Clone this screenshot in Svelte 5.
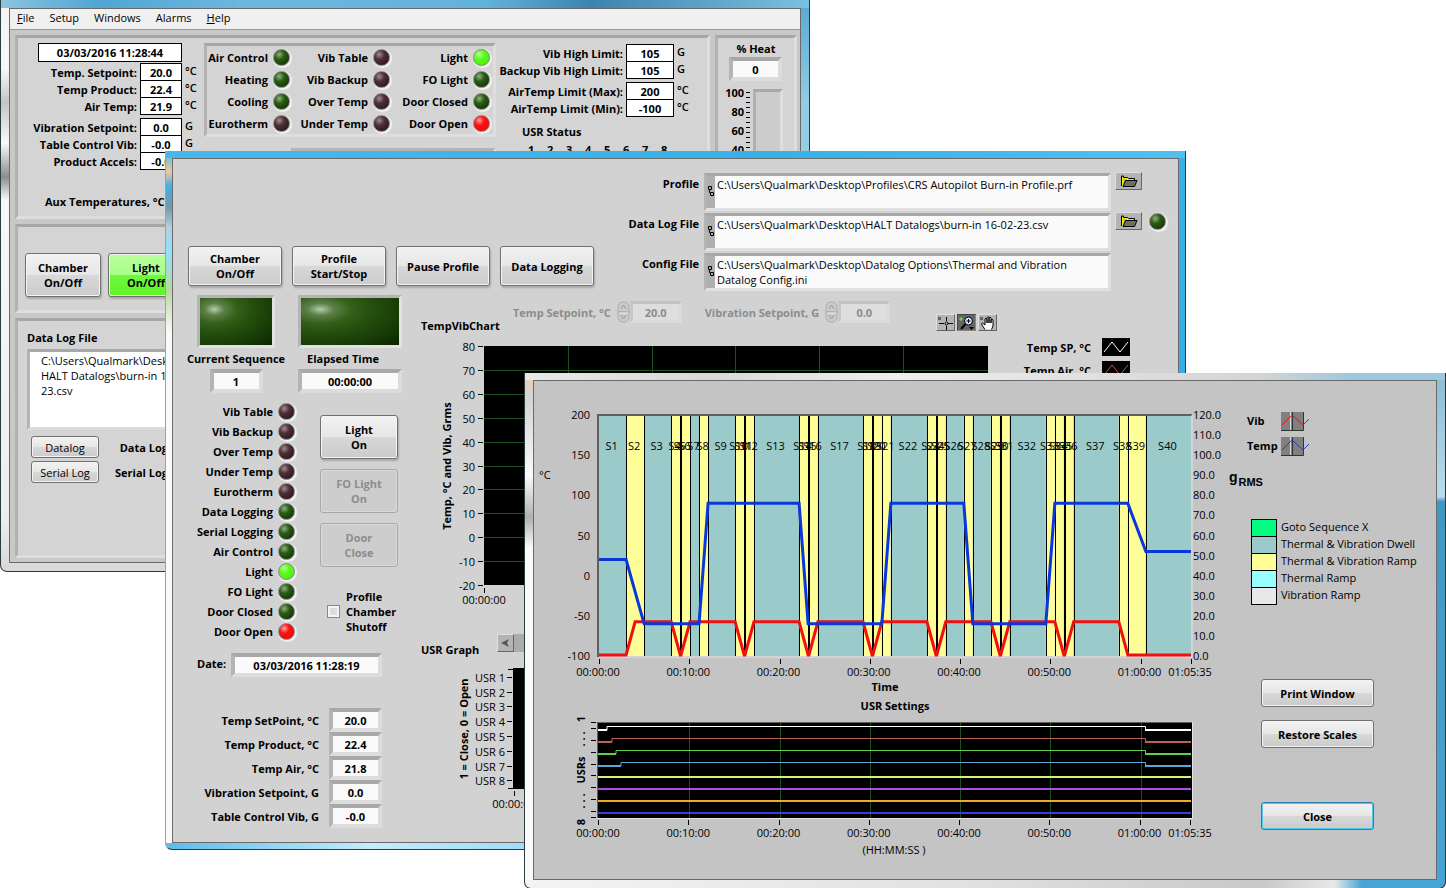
<script>
  const menus = ["File", "Setup", "Windows", "Alarms", "Help"];
  const accessKeys = ["File", "Help"];

  const readings = [
    { id: "temp-setpoint", label: "Temp. Setpoint:", value: "20.0", unit: "°C" },
    { id: "temp-product", label: "Temp Product:", value: "22.4", unit: "°C" },
    { id: "air-temp", label: "Air Temp:", value: "21.9", unit: "°C" },
    { id: "vib-setpoint", label: "Vibration Setpoint:", value: "0.0", unit: "G", gap: true },
    { id: "table-vib", label: "Table Control Vib:", value: "-0.0", unit: "G" },
    { id: "product-accels", label: "Product Accels:", value: "-0.0", unit: "G" }
  ];

  const limits = [
    { id: "vib-high", label: "Vib High Limit:", value: "105", unit: "G" },
    { id: "backup-vib-high", label: "Backup Vib High Limit:", value: "105", unit: "G" },
    { id: "air-max", label: "AirTemp Limit (Max):", value: "200", unit: "°C", gap: true },
    { id: "air-min", label: "AirTemp Limit (Min):", value: "-100", unit: "°C" }
  ];

  const overviewLeds = [
    ["Air Control", "green"], ["Vib Table", "maroon"], ["Light", "lime"],
    ["Heating", "green"], ["Vib Backup", "maroon"], ["FO Light", "green"],
    ["Cooling", "green"], ["Over Temp", "maroon"], ["Door Closed", "green"],
    ["Eurotherm", "maroon"], ["Under Temp", "maroon"], ["Door Open", "red"]
  ];

  const profileLeds = [
    ["Vib Table", "maroon"], ["Vib Backup", "maroon"], ["Over Temp", "maroon"],
    ["Under Temp", "maroon"], ["Eurotherm", "maroon"], ["Data Logging", "green"],
    ["Serial Logging", "green"], ["Air Control", "green"], ["Light", "lime"],
    ["FO Light", "green"], ["Door Closed", "green"], ["Door Open", "red"]
  ];

  const files = [
    { id: "profile", label: "Profile", path: "C:\\Users\\Qualmark\\Desktop\\Profiles\\CRS Autopilot Burn-in Profile.prf", browse: true },
    { id: "datalog", label: "Data Log File", path: "C:\\Users\\Qualmark\\Desktop\\HALT Datalogs\\burn-in 16-02-23.csv", browse: true, led: true },
    { id: "config", label: "Config File", path: "C:\\Users\\Qualmark\\Desktop\\Datalog Options\\Thermal and Vibration Datalog Config.ini" }
  ];

  const live = [
    { id: "live-sp", label: "Temp SetPoint, °C", value: "20.0" },
    { id: "live-product", label: "Temp Product, °C", value: "22.4" },
    { id: "live-air", label: "Temp Air, °C", value: "21.8" },
    { id: "live-vib", label: "Vibration Setpoint, G", value: "0.0" },
    { id: "live-table", label: "Table Control Vib, G", value: "-0.0" }
  ];

  const heatScale = [100, 80, 60, 40, 20, 0];
  const tempTicks = [80, 70, 60, 50, 40, 30, 20, 10, 0, -10, -20];

  // seconds, temperature at the end, vibration at the end, ramp
  const sequences = [
    [180, 20, 0], [120, -60, 17, 1], [180, -60, 17], [60, -60, 0, 1], [5, -60, 0],
    [60, -60, 17, 1], [60, -60, 17], [60, 90, 17, 1], [180, 90, 17], [60, 90, 0, 1],
    [5, 90, 0], [60, 90, 17, 1], [300, 90, 17], [60, -60, 0, 1], [5, -60, 0],
    [60, -60, 17, 1], [300, -60, 17], [60, -60, 0, 1], [5, -60, 0], [60, -60, 17, 1],
    [60, 90, 17, 1], [240, 90, 17], [60, 90, 0, 1], [5, 90, 0], [60, 90, 17, 1],
    [120, 90, 17], [60, -60, 17, 1], [120, -60, 17], [60, -60, 0, 1], [5, -60, 0],
    [60, -60, 17, 1], [240, -60, 17], [60, 90, 17, 1], [60, 90, 0, 1], [5, 90, 0],
    [60, 90, 17, 1], [300, 90, 17], [60, 90, 0, 1], [120, 30, 0, 1], [300, 30, 0]
  ];
  const total = 3935;
  const plot = { x: 65, y: 18, w: 592, h: 241 };

  const tx = (s) => plot.x + (s / total) * plot.w;
  const tempY = (t) => plot.y + ((200 - t) / 300) * plot.h;
  const vibY = (v) => plot.y + ((120 - v) / 120) * plot.h;

  let t = 0;
  const bands = [];
  const tempPoints = [[tx(0), tempY(20)]];
  const vibPoints = [[tx(0), vibY(0) - 1]];
  for (const [seconds, temp, vib, ramp] of sequences) {
    bands.push({ name: "S" + (bands.length + 1), x: tx(t), end: tx(t + seconds), ramp });
    tempPoints.push([tx(t + seconds), tempY(temp)]);
    let y = vibY(vib) - (vib ? 0 : 1);
    vibPoints.push([tx(t + Math.min(seconds, 60)), y], [tx(t + seconds), y]);
    t += seconds;
  }

  const times = [
    [0, "00:00:00"], [600, "00:10:00"], [1200, "00:20:00"], [1800, "00:30:00"],
    [2400, "00:40:00"], [3000, "00:50:00"], [3600, "01:00:00"], [3935, "01:05:35"]
  ];
  const vibTicks = [120, 110, 100, 90, 80, 70, 60, 50, 40, 30, 20, 10, 0];

  const usrLines = [
    { color: "#ffffff", on: 9 }, { color: "#c0605a", on: 14 },
    { color: "#5fd04c", on: 18 }, { color: "#5aa8d8", on: 23 },
    { color: "#d8f07a" }, { color: "#b050e0" }, { color: "#f0a830" }, { color: "#3c3cdc" }
  ];

  const kinds = [
    ["Goto Sequence X", "goto"],
    ["Thermal & Vibration Dwell", "dwell"],
    ["Thermal & Vibration Ramp", "both"],
    ["Thermal Ramp", "thermal"],
    ["Vibration Ramp", "vibration"]
  ];
</script>

{#snippet led(color)}
  <span class="led {color}"></span>
{/snippet}

{#snippet boxed(r)}
  <label class:gap={r.gap} for={r.id}>{r.label}</label>
  <input class="flat" class:gap={r.gap} id={r.id} value={r.value} readonly />
  <span class="unit" class:gap={r.gap}>{r.unit}</span>
{/snippet}

{#snippet setpoint(id, label, value)}
  <div class="setpoint">
    <label for={id}>{label}</label>
    <svg class="spin" width="13" height="22" viewBox="0 0 13 22">
      <rect x="1" y="1" width="11" height="20" rx="5" fill="#cacaca" stroke="#aeaeae" />
      <path d="M1 11h11M4 8l2.500-4 2.500 4M4 14l2.500 4 2.500-4" fill="none" stroke="#9a9a9a" />
      <path d="M2 12h9" stroke="#eee" />
    </svg>
    <input class="sunken" {id} {value} disabled />
  </div>
{/snippet}

<div class="desktop">
  <section class="window overview">
    <div class="client">
      <nav>
        {#each menus as m}
          <button>{#if accessKeys.includes(m)}<u>{m[0]}</u>{m.slice(1)}{:else}{m}{/if}</button>
        {/each}
      </nav>
      <div class="overview-body">
        <div class="overview-left">
          <div class="panel top-panel">
            <div class="readings">
              <input class="flat clock" aria-label="Date" value="03/03/2016 11:28:44" readonly />
              <div class="boxes">
                {#each readings as r}{@render boxed(r)}{/each}
              </div>
              <p class="aux">Aux Temperatures, °C</p>
            </div>
            <div class="status">
              <div class="panel led-grid">
                {#each overviewLeds as [name, color]}
                  <span class="name">{name}</span>{@render led(color)}
                {/each}
              </div>
              <div class="lamp strip"></div>
            </div>
            <div class="limits">
              <div class="boxes">
                {#each limits as r}{@render boxed(r)}{/each}
              </div>
              <p class="usr-status">USR Status</p>
              <div class="digits">
                {#each [1, 2, 3, 4, 5, 6, 7, 8] as n}<span>{n}</span>{/each}
              </div>
            </div>
          </div>
          <div class="panel control-panel">
            <button class="lv">Chamber<br />On/Off</button>
            <button class="lv on">Light<br />On/Off</button>
          </div>
          <div class="panel log-panel">
            <label for="log-path">Data Log File</label>
            <textarea class="sunken" id="log-path" readonly value={"C:\\Users\\Qualmark\\Desktop\\\nHALT Datalogs\\burn-in 16-02-\n23.csv"}></textarea>
            <div class="log-rows">
              <button class="lv">Datalog</button><span>Data Logging</span>
              <button class="lv">Serial Log</button><span>Serial Logging</span>
            </div>
          </div>
        </div>
        <div class="panel heat">
          <label for="heat">% Heat</label>
          <input class="sunken" id="heat" value="0" readonly />
          <div class="gauge">
            <div class="scale">
              {#each heatScale as n}<span>{n}</span>{/each}
            </div>
            <div class="ticks"></div>
            <div class="track"></div>
          </div>
        </div>
      </div>
    </div>
  </section>

  <section class="window profile">
    <div class="client">
      <header>
        <div class="commands">
          <button class="lv">Chamber<br />On/Off</button>
          <button class="lv">Profile<br />Start/Stop</button>
          <button class="lv">Pause Profile</button>
          <button class="lv">Data Logging</button>
        </div>
        <div class="files">
          {#each files as f}
            <label for={f.id}>{f.label}</label>
            <div class="path">
              <svg width="7" height="32" viewBox="0 0 7 32">
                <path d="M1.500 10.500h3v3h-3zM3.500 16.500h3v3h-3zM2.500 13.500v3h1" fill="none" stroke="#000" />
              </svg>
              <textarea id={f.id} readonly value={f.path}></textarea>
            </div>
            {#if f.browse}
              <button class="tool" aria-label="Browse {f.label}">
                <svg width="18" height="13" viewBox="0 0 18 13">
                  <path d="M2.500 10.500v-9M2.500 3h4l1 1h6.500" fill="none" stroke="#f0f000" stroke-width="2" />
                  <path d="M1.500 11V1h2v1.500h4l1 1h6v2" fill="none" stroke="#000" />
                  <path d="M3 11.500L5.500 5.500H17L14.500 11.500z" fill="#707060" stroke="#000" />
                </svg>
              </button>
            {:else}<span></span>{/if}
            {#if f.led}<span class="file-led">{@render led("green")}</span>{:else}<span></span>{/if}
          {/each}
        </div>
      </header>

      <div class="profile-body">
        <div class="profile-left">
          <div class="lamps">
            <div class="lamp small"></div>
            <div class="lamp"></div>
            <label for="seq">Current Sequence</label>
            <label class="elapsed" for="elapsed">Elapsed Time</label>
            <input class="sunken num" id="seq" value="1" readonly />
            <input class="sunken" id="elapsed" value="00:00:00" readonly />
          </div>
          <div class="middle">
            <div class="led-list">
              {#each profileLeds as [name, color]}
                <span class="name">{name}</span>{@render led(color)}
              {/each}
            </div>
            <div class="switches">
              <button class="lv">Light<br />On</button>
              <button class="lv" disabled>FO Light<br />On</button>
              <button class="lv" disabled>Door<br />Close</button>
              <label class="check"><input type="checkbox" /><span>Profile<br />Chamber<br />Shutoff</span></label>
            </div>
          </div>
          <div class="date">
            <label for="date">Date:</label>
            <input class="sunken" id="date" value="03/03/2016 11:28:19" readonly />
          </div>
          <div class="live">
            {#each live as r}
              <label for={r.id}>{r.label}</label>
              <input class="sunken num" id={r.id} value={r.value} readonly />
            {/each}
          </div>
        </div>

        <div class="profile-right">
          <div class="chart-head">
            <h2>TempVibChart</h2>
            <div class="setpoints">
              {@render setpoint("sp-temp", "Temp Setpoint, °C", "20.0")}
              {@render setpoint("sp-vib", "Vibration Setpoint, G", "0.0")}
            </div>
            <div class="tools">
              <button class="tool" aria-label="Cursor">
                <svg width="17" height="14" viewBox="0 0 17 14">
                  <path d="M1 1h3v3H1z" fill="#5a7040" />
                  <path d="M2 7.500h5M11 7.500h5M9.500 1v4M9.500 10v4" stroke="#000" />
                  <circle cx="9.500" cy="7.500" r="1.500" fill="none" stroke="#000" />
                </svg>
              </button>
              <button class="tool active" aria-label="Zoom">
                <svg width="17" height="14" viewBox="0 0 17 14">
                  <path d="M1 3h4M3 1v4" stroke="#7fe05a" />
                  <circle cx="10.500" cy="5" r="4" fill="#d8e0ff" stroke="#000" />
                  <path d="M8.500 5h4M10.500 3v4" stroke="#000" />
                  <path d="M7.500 8L3 13" stroke="#000" stroke-width="2" />
                  <path d="M11 11h5l-2.500 3z" fill="#000" />
                </svg>
              </button>
              <button class="tool" aria-label="Pan">
                <svg width="17" height="14" viewBox="0 0 17 14">
                  <path d="M1 1h3v3H1z" fill="#5a7040" />
                  <path d="M6 13.500L3 9q-1-2 .5-2L6 9V3q1-1.500 2 0v4V1.500q1-1.500 2 0V7V2q1-1.500 2 0v5V4q1-1.500 2 0v6l-1.500 3.500" fill="#fff" stroke="#000" />
                </svg>
              </button>
            </div>
          </div>
          <div class="chart-row">
            <svg class="chart" width="567" height="279" viewBox="0 0 567 279">
              <rect x="63" y="13" width="504" height="239" />
              {#each tempTicks as v, i}
                {@const y = Math.round(13 + i * 23.9) + 0.5}
                {#if i > 0 && i < 10}<path class="grid" d="M63 {y}h504" />{/if}
                <path class="tick" d="M57 {y}h5" />
                <text class="end" x="54" y={y + 4}>{v}</text>
              {/each}
              {#each [1, 2, 3, 4, 5] as i}
                <path class="grid" d="M{Math.round(63 + i * 83.8) + 0.5} 13v239" />
              {/each}
              <path class="tick" d="M63.500 255v5" />
              <text class="mid" x="63" y="271">00:00:00</text>
              <text class="mid bold" transform="translate(30 133) rotate(-90)">Temp, °C and Vib, Grms</text>
            </svg>
            <ul class="traces">
              <li>Temp SP, °C <svg width="28" height="18" viewBox="0 0 28 18"><path d="M2 14l8-10 8 10 8-10" fill="none" stroke="#fff" /></svg></li>
              <li>Temp Air, °C <svg width="28" height="18" viewBox="0 0 28 18"><path d="M2 14l8-10 8 10 8-10" fill="none" stroke="#c8504c" /></svg></li>
            </ul>
          </div>
          <div class="usr-head">
            <h2>USR Graph</h2>
            <div class="scrollbar">
              <button class="tool" aria-label="Scroll left">
                <svg width="11" height="10" viewBox="0 0 11 10"><path d="M1 5l8-4-2 4 2 4z" fill="#555" /></svg>
              </button>
            </div>
          </div>
          <svg class="chart" width="567" height="156" viewBox="0 0 567 156">
            <rect x="92" y="11" width="475" height="121" />
            <path class="tick" d="M87 12.500h5M87 131.500h5M93.500 134v5" />
            {#each [1, 2, 3, 4, 5, 6, 7, 8] as n}
              {@const y = Math.round(5 + n * 14.8) + 0.5}
              <path class="tick" d="M86 {y}h5" />
              <text class="end" x="84" y={y + 4}>USR {n}</text>
            {/each}
            <text class="mid" x="93" y="151">00:00:00</text>
            <text class="mid bold" transform="translate(47 72) rotate(-90)">1 = Close, 0 = Open</text>
          </svg>
        </div>
      </div>
    </div>
  </section>

  <section class="window preview">
    <div class="client">
      <div class="plots">
        <svg class="chart" width="692" height="299" viewBox="0 0 692 299">
          {#each bands as b}
            <path class={b.ramp ? "both" : "dwell"} d="M{b.x} {plot.y}H{b.end}v{plot.h}H{b.x}z" />
          {/each}
          {#each bands.slice(1) as b}
            <path class="tick" shape-rendering="crispEdges" d="M{Math.round(b.x) + 0.5} {plot.y}v{plot.h}" />
          {/each}
          <path class="frame" d="M64 260V18H658" />
          <path class="shine" d="M65 260H658V18" />
          {#each bands as b}
            <text class="mid" x={(b.x + b.end) / 2 - 1} y="53">{b.name}</text>
          {/each}
          <polyline class="vib" points={vibPoints.join(" ")} />
          <polyline class="temp" points={tempPoints.join(" ")} />
          {#each [200, 150, 100, 50, 0, -50, -100] as v}
            <text class="end" x="56" y={tempY(v) + 4}>{v}</text>
          {/each}
          {#each vibTicks as v}
            <text x="659" y={vibY(v) + 4}>{v.toFixed(1)}</text>
          {/each}
          {#each times as [s, name]}
            <path class="tick" d="M{Math.round(tx(s)) + 0.5} 262v5" />
            <text class="mid" x={tx(s) - 1} y="279">{name}</text>
          {/each}
          <text x="5" y="82">°C</text>
          <text class="mid bold" x="351" y="294">Time</text>
        </svg>
        <h2>USR Settings</h2>
        <svg class="chart" width="692" height="146" viewBox="0 0 692 146">
          <rect x="63" y="9" width="595" height="96" />
          {#each times.slice(1, 7) as [s]}
            <path class="grid" d="M{Math.round(tx(s)) + 0.5} 9v96" />
          {/each}
          {#each usrLines as u, i}
            {#if u.on}
              {@const y = 14 + i * 12}
              <path d="M64 {y + 3}h{u.on}v-3.500H611.500v3.500H657" fill="none" stroke={u.color} stroke-width="1" />
              <path d="M64 {y + 3}h{u.on}M611 {y + 3}h46" stroke={u.color} stroke-width="2" />
            {:else}
              <path d="M64 {16 + i * 12}H657" stroke={u.color} stroke-width="2" />
            {/if}
          {/each}
          <path class="frame thin" d="M63.500 105V9.500H658" />
          <path class="shine" d="M63 105.500H658.500V9" />
          {#each [9, 15, 27, 39, 51, 62, 74, 86, 98, 104] as y}
            <path class="tick" d="M57 {y + 0.5}h5" />
          {/each}
          {#each times as [s, name]}
            <path class="tick" d="M{Math.round(tx(s)) - 0.5} 107v5" />
            <text class="mid" x={tx(s) - 1} y="124">{name}</text>
          {/each}
          <text class="mid" x="360" y="141">(HH:MM:SS )</text>
          <g class="mid bold">
            <text transform="translate(51 6) rotate(-90)">1</text>
            <text transform="translate(51 26) rotate(-90)">. . .</text>
            <text transform="translate(51 57) rotate(-90)">USRs</text>
            <text transform="translate(51 88) rotate(-90)">. . .</text>
            <text transform="translate(51 109) rotate(-90)">8</text>
          </g>
        </svg>
      </div>
      <aside>
        <ul class="series">
          {#each [["Vib", "#d81818"], ["Temp", "#1c3cd0"]] as [name, color]}
            <li>
              <span>{name}</span>
              <svg width="30" height="20" viewBox="0 0 30 20">
                <path d="M0 1h22v18H0z" fill="#808080" />
                <path d="M0 19.500h22.500V1M11.500 1v18" fill="none" stroke="#333" />
                <path d="M9.500 1v18" stroke="#ddd" />
                <path d="M1 14L11 4l11 10 6-6" fill="none" stroke={color} />
              </svg>
            </li>
          {/each}
        </ul>
        <p class="grms">g <sub>RMS</sub></p>
        <ul class="kinds">
          {#each kinds as [name, kind]}
            <li><span class="swatch {kind}"></span>{name}</li>
          {/each}
        </ul>
        <div class="actions">
          <button class="lv">Print Window</button>
          <button class="lv">Restore Scales</button>
          <button class="lv close">Close</button>
        </div>
      </aside>
    </div>
  </section>
</div>

<style>
  :global(body) {
    background: #fff;
  }

  .desktop {
    position: relative;
    min-height: 100vh;
    min-width: 1446px;
    overflow: hidden;
    font: 11px/15px "Open Sans", "Noto Sans", sans-serif;
    color: #000;
  }

  .desktop * { box-sizing: border-box; }

  p, h2, ul { margin: 0; padding: 0; }
  h2 { font-size: 11px; line-height: 15px; }
  ul { list-style: none; }

  button, input, textarea {
    font: inherit;
    color: inherit;
    margin: 0;
  }

  textarea {
    resize: none;
    overflow: hidden;
    border: 0;
    outline: 0;
    background: #fafafa;
  }

  label, input, .name { font-weight: 700; white-space: nowrap; }

  input { text-align: center; padding: 0; min-width: 0; }

  /* windows */
  .window {
    position: absolute;
    border-radius: 0 0 7px 7px;
    border: 1px solid #2c3a42;
    border-top: 0;
  }

  .client { border: 1px solid #6a6a6a; }

  .overview {
    left: 0;
    top: 0;
    width: calc(100% - 636px);
    padding: 8px;
    background:
      linear-gradient(90deg, #8cc4de, #4fa6d4 12%, #6cb8de 30%, #62b2de 60%, #3c84b0 73%, #7cc0e0) top / 100% 8px no-repeat,
      linear-gradient(#5aa8d4, #90cce4 18%, #b8dcec) right / 9px 100% no-repeat,
      linear-gradient(#f4f4f4, #f8f8f8 12%, #c4c4c4 18%, #fafafa 25%, #8c8c8c 31%, #f8f8f8 35%, #eee 90%, #d8d8d8);
  }

  .profile {
    left: 165px;
    top: 151px;
    width: calc(100% - 425px);
    padding: 7px 6px 6px 6px;
    border-left-color: #9aa4a8;
    background:
      linear-gradient(90deg, #48b8ec, #38b0e8 60%, #50c0f0) top / 100% 7px no-repeat,
      linear-gradient(#38b0e8, #30ace6) right / 6px 100% no-repeat,
      linear-gradient(90deg, #5cbcec, #c4ecfc 20%, #68c4f0 60%, #b8e4f8) bottom / 100% 6px no-repeat,
      linear-gradient(#48b8ec, #f0c8a0 3%, #40b0e4 5%, #709aa8 8%, #b8d0e0 11%, #90e0ff 14%, #b8d8a0 20%, #fafafa 26%);
  }

  .preview {
    left: 524px;
    right: 0;
    top: 373px;
    padding: 7px 8px 8px 8px;
    background:
      linear-gradient(90deg, #e8e8e8, #d8d8d8 20%, #eee 40%, #d4d4d4 80%, #9cc8e0 90%) top / 100% 7px no-repeat,
      linear-gradient(90deg, #f4f4f4, #e0e0e0 50%, #c8c8c8 80%, #e8e8e8 88%, #48a4d4 91%) bottom / 100% 8px no-repeat,
      linear-gradient(#8cbcd4, #b8dcec 24%, #4098c4 25%, #48a4d4) right / 8px 100% no-repeat,
      linear-gradient(#e8d0b0, #d4d4d4 5%, #fafafa 20%, #b0b0b0 28%, #fafafa 34%, #fafafa);
  }

  .profile .client { background: #d2d2d2; }
  .preview .client { background: #c4c4c4; display: flex; padding-bottom: 20px; }

  /* shared parts */
  .panel {
    border: 3px solid;
    border-color: #a6a6a6 #dedede #dedede #b2b2b2;
    background: #d4d4d4;
  }

  .sunken {
    height: 24px;
    border: 4px solid;
    border-color: #a8a8a8 #dcdcdc #dcdcdc #b4b4b4;
    border-radius: 0;
    background: #fafafa;
    outline: 0;
  }

  .num { width: 53px; }

  .flat {
    height: 18px;
    border: 1px solid #000;
    border-radius: 0;
    background: #fff;
  }

  .lv {
    padding: 0;
    font-weight: 700;
    border: 1px solid #707070;
    border-radius: 3px;
    background: linear-gradient(#f2f2f2, #e6e6e6 50%, #d8d8d8 50%, #cbcbcb);
    box-shadow: inset 0 0 0 1px #f4f4f4, 1px 2px 2px #a8a8a8;
  }

  .lv.on {
    background: linear-gradient(#b8ff9c, #a8ff88 50%, #70f840 50%, #60f428);
  }

  .lv:disabled {
    color: #8c8c8c;
    border-color: #a8a8a8;
    background: #cdcdcd;
    box-shadow: inset 0 0 0 1px #dadada;
  }

  .led {
    width: 17px;
    height: 17px;
    border-radius: 50%;
    border: 1px solid #888;
    box-shadow: 1px 1px 1px 1px #f2f2f2;
    justify-self: center;
  }

  .green { background: radial-gradient(circle at 35% 30%, #90b080, #2a5c14 35%, #1a3e0a 70%, #0c2004); }
  .maroon { background: radial-gradient(circle at 35% 30%, #a08c90, #4c3036 35%, #341c22 70%, #1c0c10); }
  .lime { background: radial-gradient(circle at 35% 30%, #b8ff9c, #58fc18 35%, #48e80c); }
  .red { background: radial-gradient(circle at 35% 30%, #ffa0a0, #fc1010 35%, #e80808); }

  .lamp {
    height: 53px;
    border: 3px solid;
    border-color: #b4b4b4 #e2e2e2 #e2e2e2 #b4b4b4;
    background: radial-gradient(ellipse at 20% 24%, #b4ccaa, #5c8048 12%, #34601a 28%, #26500f 45%, #173a06 75%, #0e2402);
  }

  .tool {
    display: flex;
    align-items: center;
    justify-content: center;
    padding: 0;
    height: 17px;
    border: 1px solid;
    border-color: #e0e0e0 #666 #666 #e0e0e0;
    background: #b4b4b4;
  }

  .tool.active { background: #666; border-color: #444 #888 #888 #444; }

  /* overview window */
  nav {
    display: flex;
    height: 21px;
    padding: 0 0 3px 7px;
    gap: 15px;
    background: #f0f0f0;
    border-bottom: 1px solid #999;
  }

  nav button { border: 0; padding: 0; background: none; }

  .overview-body {
    display: flex;
    gap: 5px;
    padding: 5px 3px 4px 5px;
    background: #c8c8c8;
  }

  .overview-left {
    flex: 1;
    display: flex;
    flex-direction: column;
    gap: 5px;
  }

  .top-panel {
    display: flex;
    align-items: flex-start;
    height: 184px;
    padding-top: 5px;
  }

  .readings { width: 186px; }

  .clock {
    display: block;
    width: 144px;
    height: 19px;
    margin: 0 0 1px 20px;
  }

  .boxes {
    display: grid;
    grid-template-columns: 119px 42px 18px;
    column-gap: 3px;
  }

  .boxes label { text-align: right; line-height: 20px; }
  .boxes > * { height: 18px; margin-bottom: -1px; }
  .boxes > .gap { margin-top: 4px; }
  .unit { font-weight: 600; }

  .aux { margin: 25px 0 0 27px; font-weight: 700; }

  .status { width: 294px; }

  .led-grid {
    display: grid;
    grid-template-columns: 61px 18px 74px 18px 74px 18px;
    grid-auto-rows: 22px;
    column-gap: 4px;
    align-items: center;
    width: 292px;
  }

  .name { text-align: right; justify-self: end; }

  .strip { height: 30px; margin: 11px 2px 0 87px; }

  .limits .boxes { grid-template-columns: 125px 48px 18px; margin-top: 1px; }
  .usr-status { margin: 8px 0 3px 24px; font-weight: 700; }

  .digits {
    display: flex;
    gap: 12px;
    padding-left: 30px;
    font-weight: 700;
  }

  .digits span { width: 7px; }

  .control-panel {
    display: flex;
    gap: 7px;
    height: 89px;
    padding: 26px 8px 0 7px;
  }

  .control-panel .lv { width: 76px; height: 44px; }

  .log-panel { height: 240px; padding: 9px; }
  .log-panel label { display: block; margin-bottom: 4px; }

  .log-panel textarea {
    display: block;
    width: 200px;
    height: 81px;
    padding: 1px 11px;
    background: #fff;
    border-width: 3px;
  }

  .log-rows {
    display: grid;
    grid-template-columns: 68px 92px;
    gap: 3px 0;
    align-items: center;
    padding: 6px 0 0 4px;
    font-weight: 700;
  }

  .log-rows span { text-align: right; }
  .log-rows .lv { height: 22px; font-weight: 400; box-shadow: inset 0 0 0 1px #f4f4f4; }

  .heat {
    width: 82px;
    padding-top: 3px;
    text-align: center;
  }

  .heat .sunken { display: block; width: 53px; height: 24px; margin: 1px 0 8px 11px; }

  .gauge { display: flex; }
  .scale { width: 26px; text-align: right; font-weight: 700; margin-top: -4px; }
  .scale span { display: block; height: 19px; }

  .ticks {
    width: 4px;
    height: 96px;
    margin: 3px 3px 0 2px;
    background: repeating-linear-gradient(#000 0 1px, transparent 1px 5px);
  }

  .track {
    width: 30px;
    border: 3px solid;
    border-color: #a8a8a8 #dedede #dedede #b0b0b0;
    background: #ccc;
  }

  /* profile window */
  header { display: flex; align-items: flex-end; padding: 14px 12px 0 15px; }

  .commands { display: flex; gap: 10px; margin-bottom: 5px; }
  .commands .lv { width: 94px; height: 40px; }

  .files {
    flex: 1;
    display: grid;
    grid-template-columns: 106px 1fr 27px 20px;
    gap: 2px 4px;
    align-items: start;
  }

  .files label { text-align: right; padding: 3px 1px 0 0; }
  .files .tool { height: 18px; margin-top: -1px; }
  .file-led { display: grid; justify-content: end; }

  .path {
    display: flex;
    height: 38px;
    border: 3px solid;
    border-color: #a8a8a8 #e0e0e0 #e0e0e0 #b4b4b4;
    background: #b0b0b0;
  }

  .path svg { margin-right: 1px; }
  .path textarea { flex: 1; padding: 1px 2px; height: 32px; }

  .profile-body { display: flex; padding: 4px 0 14px 12px; gap: 19px; }
  .profile-left { width: 217px; }

  .lamps {
    display: grid;
    grid-template-columns: 102px 104px;
    column-gap: 11px;
    justify-items: center;
  }

  .lamps .lamp { width: 100%; margin-bottom: 3px; }
  .lamps .small { width: 78px; }
  .lamps label { margin-bottom: 3px; }
  .lamps .elapsed { justify-self: start; padding-left: 9px; }
  .lamps input:last-child { width: 104px; }

  .middle { display: flex; gap: 25px; padding-top: 8px; }

  .led-list {
    display: grid;
    grid-template-columns: 88px 18px;
    grid-auto-rows: 20px;
    column-gap: 4px;
    align-items: center;
  }

  .switches {
    display: flex;
    flex-direction: column;
    gap: 10px;
    width: 78px;
    padding-top: 14px;
  }

  .switches .lv { height: 44px; }

  .check { display: flex; align-items: center; gap: 6px; padding: 12px 0 0 7px; }

  .check input {
    appearance: none;
    flex: none;
    width: 13px;
    height: 13px;
    border: 1px solid #888;
    background: #dcdcdc;
    box-shadow: inset 0 0 0 2px #f4f4f4;
  }

  .date { display: flex; gap: 3px; padding: 12px 0 31px 12px; }
  .date label { width: 31px; padding-top: 3px; }
  .date input { width: 151px; }

  .live {
    display: grid;
    grid-template-columns: 134px 53px;
    column-gap: 10px;
    align-items: center;
    text-align: right;
  }

  .profile-right { flex: 1; padding-top: 6px; }

  .chart-head { display: flex; align-items: flex-end; height: 32px; }
  .chart-head h2 { width: 92px; }

  .setpoints { display: flex; gap: 23px; align-self: flex-start; }
  .setpoint { display: flex; align-items: center; color: #8c8c8c; }
  .setpoint label { margin-right: 6px; }
  .setpoint .sunken { width: 52px; height: 22px; background: #dedede; border-color: #c2c2c2 #dadada #dadada #c8c8c8; border-width: 3px; }

  .tools { display: flex; gap: 2px; margin: 0 0 2px 46px; }
  .tools .tool { width: 19px; }

  .chart-row { display: flex; }
  .chart { display: block; flex: none; }
  .traces { width: 142px; padding-top: 5px; font-weight: 700; }

  .traces li {
    display: flex;
    justify-content: flex-end;
    align-items: center;
    gap: 11px;
    margin-bottom: 5px;
  }

  .traces svg { background: #000; }

  .usr-head { display: flex; gap: 15px; padding-top: 22px; }
  .usr-head h2 { padding-top: 8px; width: 61px; }
  .scrollbar { width: 491px; height: 18px; background: #acacac; }
  .scrollbar .tool { width: 17px; height: 18px; }

  .chart text { font-size: 11px; }
  .chart .end { text-anchor: end; }
  .chart .mid { text-anchor: middle; }
  .chart .bold { font-weight: 700; }
  .chart .tick { stroke: #000; }
  .chart .grid { stroke: #1c501c; }
  .chart .frame { fill: none; stroke: #606060; stroke-width: 2; }
  .chart .thin { stroke-width: 1; }
  .chart .shine { fill: none; stroke: #e4e4e4; }
  .chart .vib { fill: none; stroke: #f01010; stroke-width: 3; }
  .chart .temp { fill: none; stroke: #0838dc; stroke-width: 3; }

  .dwell { fill: #9acaca; background: #9acaca; }
  .both { fill: #fefe98; background: #fefe98; }
  .goto { background: #00fc80; }
  .thermal { background: #98feff; }
  .vibration { background: #e8e8e8; }

  /* preview window */
  .plots { padding-top: 16px; }
  .plots h2 { padding: 2px 0 0 30px; text-align: center; }

  aside { padding-top: 27px; }

  .series { margin-left: 21px; font-weight: 700; }
  .series li { display: flex; align-items: center; height: 25px; }
  .series span { width: 34px; }

  .grms { margin: 9px 0 32px 3px; font: 700 14px/20px "Liberation Sans", sans-serif; }
  .grms sub { font-size: 11px; line-height: 0; margin-left: -3px; }

  .kinds { margin-left: 25px; }
  .kinds li { display: flex; gap: 4px; height: 17px; }
  .swatch { width: 26px; height: 18px; border: 1px solid #000; }

  .actions {
    display: flex;
    flex-direction: column;
    gap: 13px;
    width: 113px;
    margin: 75px 0 0 35px;
  }

  .actions .lv { height: 28px; box-shadow: inset 0 0 0 1px #f4f4f4; }
  .actions .close { margin-top: 41px; border-color: #2c80b0; box-shadow: inset 0 0 0 1px #50c8f0; }
</style>
